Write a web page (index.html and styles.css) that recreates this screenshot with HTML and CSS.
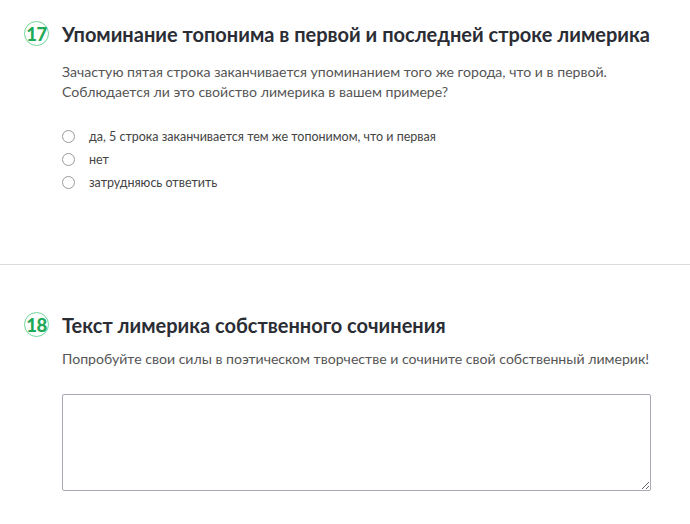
FILE: index.html
```
<!DOCTYPE html>
<html lang="ru">
<head>
<meta charset="utf-8">
<link rel="stylesheet" href="styles.css">
</head>
<body>
<section class="question q-first">
  <div class="q-head">
    <span class="q-num">17</span>
    <h2 class="q-title">Упоминание топонима в первой и последней строке лимерика</h2>
  </div>
  <p class="q-desc">Зачастую пятая строка заканчивается упоминанием того же города, что и в первой.<br>Соблюдается ли это свойство лимерика в вашем примере?</p>
  <ul class="options">
    <li class="option"><span class="radio"></span><span class="opt-text">да, 5 строка заканчивается тем же топонимом, что и первая</span></li>
    <li class="option"><span class="radio"></span><span class="opt-text">нет</span></li>
    <li class="option"><span class="radio"></span><span class="opt-text">затрудняюсь ответить</span></li>
  </ul>
</section>
<hr class="divider">
<section class="question q-second">
  <div class="q-head">
    <span class="q-num">18</span>
    <h2 class="q-title">Текст лимерика собственного сочинения</h2>
  </div>
  <p class="q-desc q-desc-tight">Попробуйте свои силы в поэтическом творчестве и сочините свой собственный лимерик!</p>
  <textarea class="answer"></textarea>
</section>
</body>
</html>
```
FILE: styles.css
```
html, body {
  margin: 0;
  padding: 0;
  background: #fff;
}
body {
  font-family: Lato, "Open Sans", sans-serif;
  color: #333;
}
.question {
  padding: 0 40px 0 24px;
}
.q-first {
  padding-top: 21px;
  height: 264px;
  box-sizing: border-box;
}
.q-second {
  padding-top: 47px;
}
.q-head {
  display: flex;
  align-items: center;
  gap: 13px;
}
.q-num {
  box-sizing: border-box;
  width: 25px;
  height: 25px;
  border: 1.5px solid #6fd69a;
  border-radius: 50%;
  color: #1fa957;
  font-weight: 900;
  font-size: 18.5px;
  display: flex;
  align-items: center;
  justify-content: center;
  letter-spacing: -0.5px;
  flex: none;
}
.q-title {
  margin: 0;
  font-size: 20px;
  font-weight: 700;
  color: #2b2d35;
  line-height: 24px;
}
.q-desc {
  margin: 16px 0 0 38px;
  font-size: 14.1px;
  line-height: 20px;
  color: #555;
}
.q-desc-tight {
  margin-top: 12px;
}
.options {
  list-style: none;
  margin: 23px 0 0 38px;
  padding: 0;
}
.option {
  display: flex;
  align-items: center;
  height: 23px;
  font-size: 12.5px;
  color: #444;
}
.radio {
  box-sizing: border-box;
  width: 13px;
  height: 13px;
  border: 1px solid #9b9b9b;
  border-radius: 50%;
  margin-right: 14px;
  flex: none;
}
.divider {
  margin: 0;
  border: 0;
  border-top: 1px solid #dcdcdc;
}
.answer {
  display: block;
  box-sizing: border-box;
  margin: 25px 0 0 38px;
  width: 589px;
  height: 97px;
  border: 1px solid #a9a9b5;
  border-radius: 2px;
  resize: vertical;
}
```
